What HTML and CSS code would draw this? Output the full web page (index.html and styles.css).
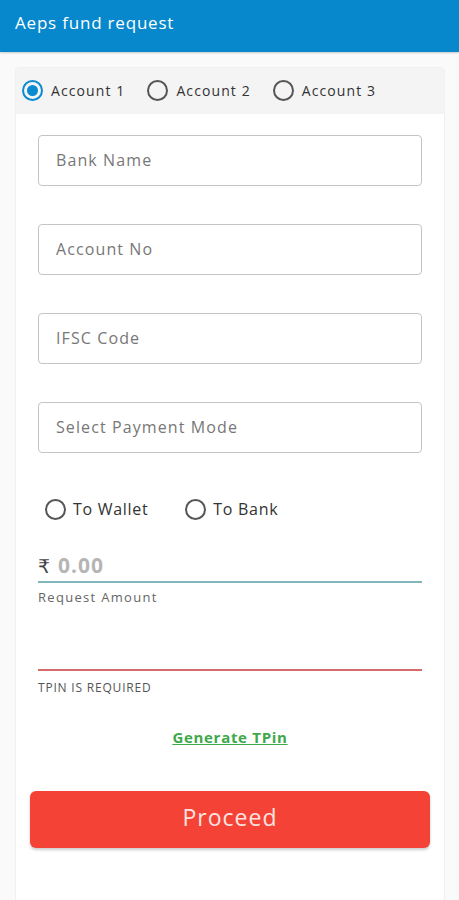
FILE: index.html
```html
<!DOCTYPE html>
<html>
<head>
<meta charset="utf-8">
<link rel="stylesheet" href="styles.css">
</head>
<body>
<header class="appbar">Aeps fund request</header>
<main class="page">
  <section class="card">
    <div class="acct-row">
      <label class="radio"><span class="dot checked"></span>Account 1</label>
      <label class="radio"><span class="dot"></span>Account 2</label>
      <label class="radio"><span class="dot"></span>Account 3</label>
    </div>
    <div class="form">
      <div class="field">Bank Name</div>
      <div class="field">Account No</div>
      <div class="field">IFSC Code</div>
      <div class="field">Select Payment Mode</div>
      <div class="mode-row">
        <label class="radio big"><span class="dot"></span>To Wallet</label>
        <label class="radio big"><span class="dot"></span>To Bank</label>
      </div>
      <div class="amount">
        <span class="rupee">₹</span><span class="amt">0.00</span>
      </div>
      <div class="hint">Request Amount</div>
      <div class="tpin"></div>
      <div class="hint err">TPIN IS REQUIRED</div>
      <div class="gen"><a class="gen-link">Generate TPin</a></div>
      <button class="proceed">Proceed</button>
    </div>
  </section>
</main>
</body>
</html>
```
FILE: styles.css
```css
* { box-sizing: border-box; }
html, body { margin: 0; padding: 0; }
body {
  background: #fafafa;
  font-family: "Open Sans", "DejaVu Sans", sans-serif;
  color: #333;
  height: 900px;
  overflow: hidden;
}
.appbar {
  height: 52px;
  background: #0888cc;
  color: #fff;
  font-size: 17px;
  padding: 11px 15px 0;
  letter-spacing: 0.8px;
  box-shadow: 0 1px 2px rgba(0,0,0,0.2);
}
.page {
  padding: 15px 14px 0 15px;
}
.card {
  background: #fff;
  border: 1px solid #f0f0f0;
  border-radius: 4px;
  height: 840px;
}
.acct-row {
  height: 46px;
  background: #f4f4f4;
  display: flex;
  align-items: center;
  padding-left: 6px;
  padding-bottom: 2px;
}
.radio {
  display: flex;
  align-items: center;
  font-size: 14px;
  color: #333;
  letter-spacing: 1.1px;
}
.acct-row .radio { margin-right: 22px; }
.dot {
  flex: none;
  width: 21px;
  height: 21px;
  border: 2px solid #555;
  border-radius: 50%;
  margin-right: 8px;
  position: relative;
}
.dot.checked {
  border-color: #0a8ad0;
}
.dot.checked::after {
  content: "";
  position: absolute;
  left: 3px; top: 3px;
  width: 11px; height: 11px;
  border-radius: 50%;
  background: #0a8ad0;
}
.form {
  padding: 21px 22px 0 22px;
}
.field {
  height: 51px;
  border: 1px solid #c4c4c4;
  border-radius: 4px;
  font-size: 16px;
  color: #777;
  padding: 13px 17px 0;
  margin-bottom: 38px;
  letter-spacing: 1.1px;
}
.field:nth-child(4) { margin-bottom: 45px; }
.mode-row {
  display: flex;
  padding-left: 7px;
  height: 22px;
}
.radio.big { font-size: 16px; margin-right: 37px; letter-spacing: 0.7px; }
.radio.big .dot { margin-right: 7px; }
.amount {
  margin-top: 31px;
  height: 32px;
  border-bottom: 2px solid #82b6bd;
  display: flex;
  align-items: baseline;
}
.rupee { font-size: 19px; color: #444; margin-right: 8px; font-family: "DejaVu Sans", sans-serif; }
.amt { font-size: 21px; font-weight: 700; color: #b5b5b5; letter-spacing: 1px; }
.hint {
  font-size: 13px;
  color: #666;
  margin-top: 5px;
  height: 17px;
  letter-spacing: 1.3px;
}
.tpin {
  margin-top: 64px;
  border-bottom: 2px solid #d56a6a;
}
.err { margin-top: 8px; color: #555; font-size: 12px; letter-spacing: 0.8px; }
.gen {
  text-align: center;
  margin-top: 30px;
  height: 20px;
}
.gen-link {
  color: #3ea84a;
  font-weight: 700;
  font-size: 15px;
  letter-spacing: 0.7px;
  text-decoration: underline;
}
.proceed {
  display: block;
  margin: 45px -8px 0;
  width: calc(100% + 16px);
  height: 57px;
  padding: 0 0 5px;
  background: #f44336;
  color: #fbe3e0;
  border: none;
  border-radius: 6px;
  font-family: "Open Sans", sans-serif;
  font-size: 23px;
  letter-spacing: 1px;
  box-shadow: 0 2px 3px rgba(0,0,0,0.2);
}
```
